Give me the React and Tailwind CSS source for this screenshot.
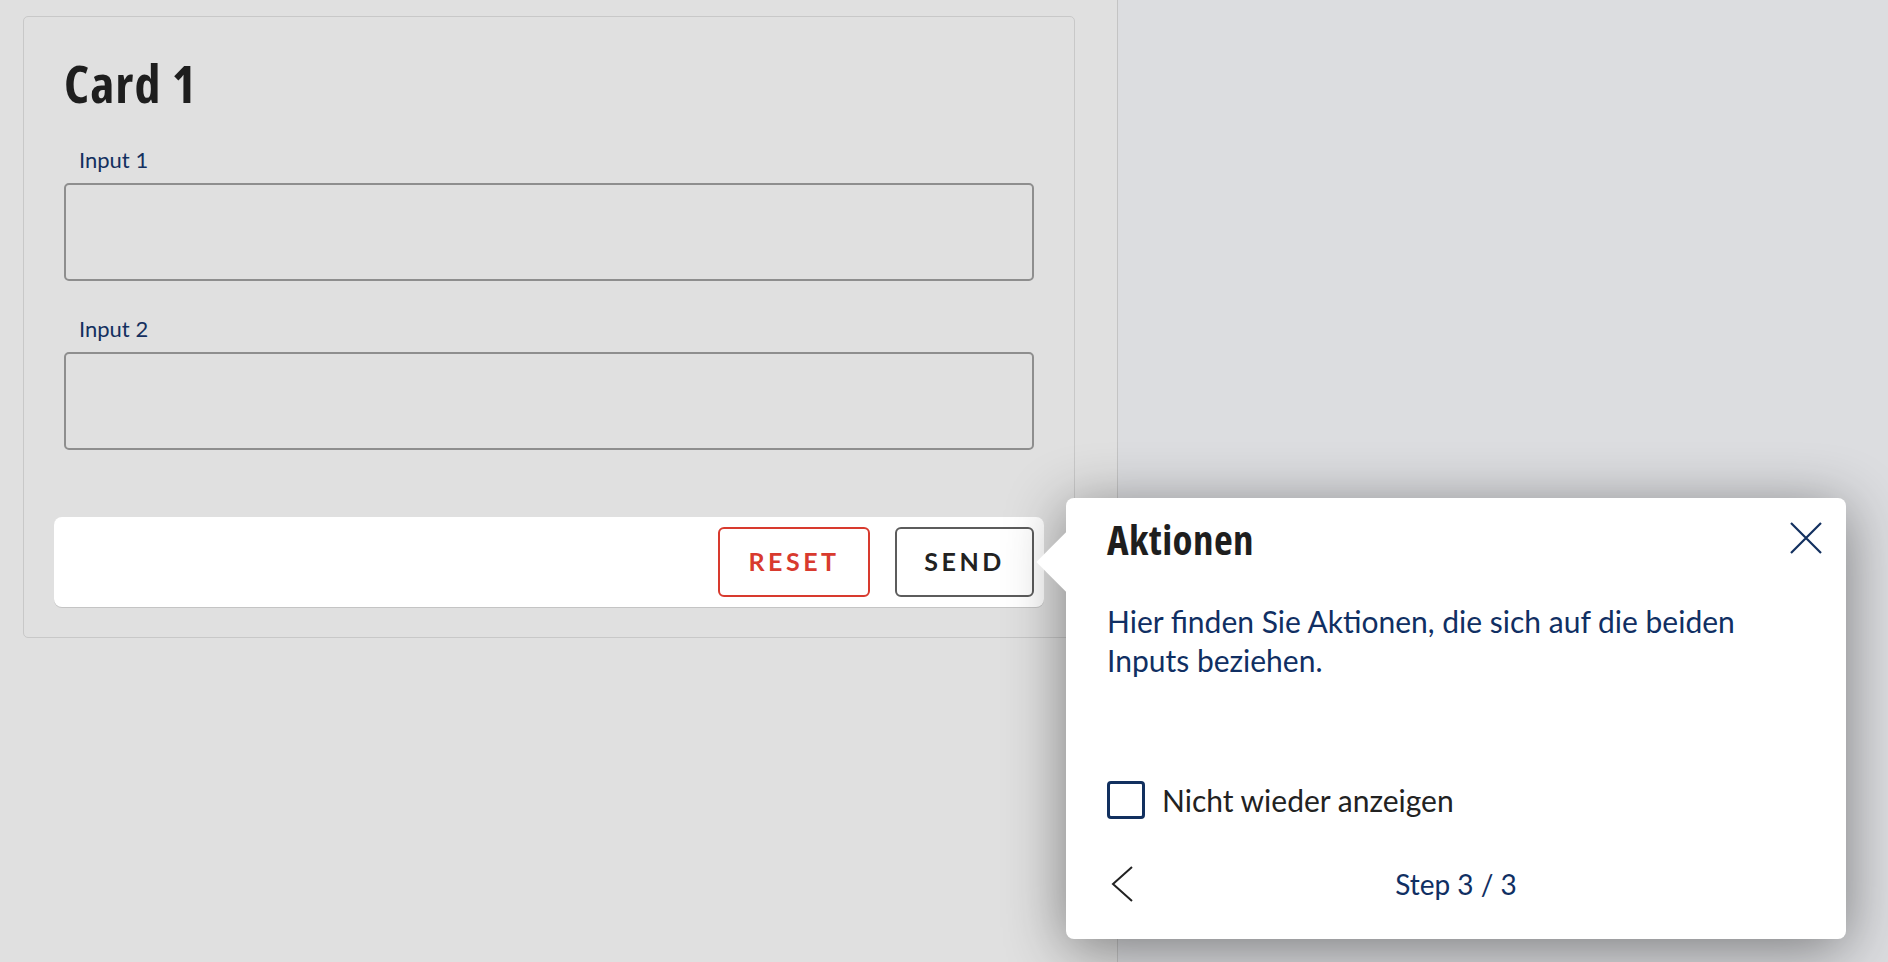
import React from "react";

function Field({ label }) {
  return (
    <div className="flex flex-col">
      <label className="pl-[15px] font-['Lato',sans-serif] text-[22px] leading-[28px] text-[#14305f]">{label}</label>
      <div className="mt-[9px] h-[98px] rounded-[5px] border-2 border-[#8e8e8e] bg-[#e0e0e0]" />
    </div>
  );
}

function CloseIcon() {
  return (
    <svg width="32" height="32" viewBox="0 0 32 32" fill="none" stroke="#12305f" strokeWidth="2.2">
      <path d="M1 1 L31 31 M31 1 L1 31" />
    </svg>
  );
}

function BackIcon() {
  return (
    <svg width="26" height="36" viewBox="0 0 26 36" fill="none" stroke="#222" strokeWidth="2">
      <path d="M25 1 L6 18 L25 35" />
    </svg>
  );
}

function Popover() {
  return (
    <div className="absolute left-[1066px] top-[498px] w-[780px] rounded-[8px] bg-white pb-[37px] pt-[19px] shadow-[0_10px_60px_rgba(0,0,0,0.45)]">
      <div className="absolute left-[-21px] top-[43px] h-[42px] w-[42px] rotate-45 bg-white" />
      <div className="relative flex items-start justify-between pl-[41px] pr-[24px]">
        <h2 className="font-['Open_Sans',sans-serif] text-[41px] font-bold leading-[44px] tracking-[0.01em] font-stretch-[75%] text-[#1e1e1e]">
          Aktionen
        </h2>
        <div className="mt-[5px]">
          <CloseIcon />
        </div>
      </div>
      <p className="relative mt-[41px] pl-[41px] pr-[79px] font-['Lato',sans-serif] text-[30px] leading-[39px] text-[#102f63]">
        Hier finden Sie Aktionen, die sich auf die beiden Inputs beziehen.
      </p>
      <label className="relative mt-[101px] flex items-center gap-[17px] pl-[41px] font-['Lato',sans-serif]">
        <span className="h-[38px] w-[38px] rounded-[4px] border-[3px] border-[#12305f]" />
        <span className="text-[30px] leading-[38px] text-[#222]">Nicht wieder anzeigen</span>
      </label>
      <div className="relative mt-[47px] grid grid-cols-[1fr_auto_1fr] items-center px-[41px] font-['Lato',sans-serif]">
        <BackIcon />
        <span className="text-[28px] leading-[36px] text-[#102f63]">Step 3 / 3</span>
        <span />
      </div>
    </div>
  );
}

export default function App() {
  return (
    <div className="relative flex h-[962px] w-full overflow-hidden bg-[#dcdde0]">
      <div className="h-full w-[1118px] shrink-0 border-r border-[#c4c4c4] bg-[#e0e0e0] pl-[23px] pt-[16px]">
        <div className="flex h-[622px] w-[1052px] flex-col rounded-[5px] border border-[#c8c8c8] px-[40px] pt-[38px]">
          <h1 className="font-['Open_Sans',sans-serif] text-[52px] font-bold leading-[56px] tracking-[0.02em] font-stretch-[75%] text-[#1e1e1e]">
            Card 1
          </h1>
          <div className="mt-[35px] flex flex-col gap-[34px]">
            <Field label="Input 1" />
            <Field label="Input 2" />
          </div>
          <div className="mx-[-10px] mt-[67px] flex items-center justify-end gap-[25px] rounded-[8px] bg-white px-[10px] py-[10px] shadow-[0_1px_0_#c4c4c4]">
            <button className="h-[70px] w-[152px] rounded-[6px] border-2 border-[#d83a2e] bg-white font-['Lato',sans-serif] text-[25px] font-bold tracking-[0.14em] text-[#d83a2e]">
              RESET
            </button>
            <button className="h-[70px] w-[139px] rounded-[6px] border-2 border-[#5c5c5c] bg-white font-['Lato',sans-serif] text-[25px] font-bold tracking-[0.14em] text-[#222]">
              SEND
            </button>
          </div>
        </div>
      </div>
      <Popover />
    </div>
  );
}
